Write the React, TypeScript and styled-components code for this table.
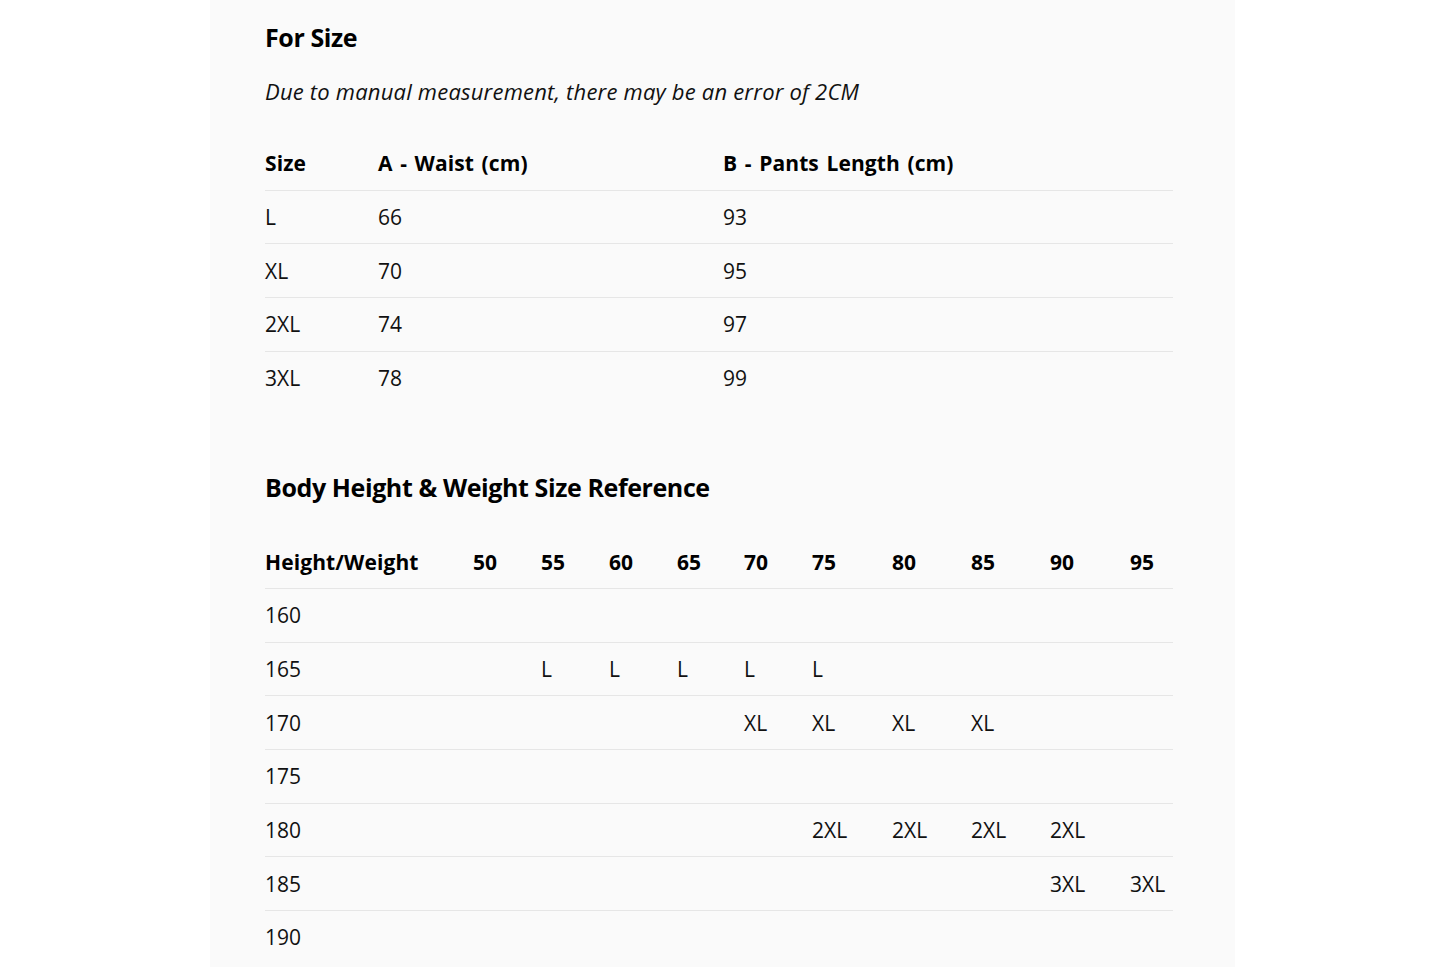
import React from "react";
import styled, { createGlobalStyle } from "styled-components";

const GlobalStyle = createGlobalStyle`
  html, body {
    margin: 0;
    padding: 0;
    background: #ffffff;
  }
  body {
    font-family: "Open Sans", "Noto Sans", Arial, sans-serif;
    color: #111;
  }
`;

const Page = styled.div`
  display: flex;
  justify-content: flex-start;
  min-height: 967px;
  padding-left: 210px;
`;

const Panel = styled.section`
  width: 1025px;
  min-height: 967px;
  box-sizing: border-box;
  background: #fafafa;
  padding: 19px 62px 0 55px;
`;

const Heading = styled.h2<{ $top: number }>`
  margin: ${(p) => p.$top}px 0 0;
  font-size: 25px;
  line-height: 36px;
  font-weight: 700;
  color: #000;
  letter-spacing: -0.4px;
`;

const Note = styled.p`
  margin: 21px 0 0;
  font-size: 22px;
  line-height: 30px;
  font-style: italic;
  color: #111;
  letter-spacing: 0.2px;
`;

const Table = styled.table<{ $top: number }>`
  width: 908px;
  margin-top: ${(p) => p.$top}px;
  border-collapse: collapse;
  table-layout: fixed;
`;

const Row = styled.tr`
  & + & {
    border-top: 1px solid #e6e6e6;
  }
`;

const HeadRow = styled.tr`
  border-bottom: 1px solid #e6e6e6;
`;

const Th = styled.th`
  height: 52.67px;
  padding: 0;
  text-align: left;
  vertical-align: middle;
  font-size: 21px;
  font-weight: 700;
  color: #000;
  letter-spacing: 0.1px;
  word-spacing: 2px;
  white-space: nowrap;
`;

const Td = styled.td`
  height: 52.67px;
  padding: 0;
  text-align: left;
  vertical-align: middle;
  font-size: 21px;
  font-weight: 400;
  color: #111;
  white-space: nowrap;
`;

const sizeRows = [
  ["L", "66", "93"],
  ["XL", "70", "95"],
  ["2XL", "74", "97"],
  ["3XL", "78", "99"],
];

const weights = ["50", "55", "60", "65", "70", "75", "80", "85", "90", "95"];
const weightCols = [208, 68, 68, 68, 67, 68, 80, 79, 79, 80];

const heightRows: [string, string[]][] = [
  ["160", []],
  ["165", ["", "L", "L", "L", "L", "L"]],
  ["170", ["", "", "", "", "XL", "XL", "XL", "XL"]],
  ["175", []],
  ["180", ["", "", "", "", "", "2XL", "2XL", "2XL", "2XL"]],
  ["185", ["", "", "", "", "", "", "", "", "3XL", "3XL"]],
  ["190", []],
];

export default function App() {
  return (
    <>
      <GlobalStyle />
      <Page>
        <Panel>
          <Heading $top={0}>For Size</Heading>
          <Note>Due to manual measurement, there may be an error of 2CM</Note>

          <Table $top={31}>
            <colgroup>
              <col style={{ width: 113 }} />
              <col style={{ width: 345 }} />
              <col />
            </colgroup>
            <thead>
              <HeadRow>
                <Th>Size</Th>
                <Th>A - Waist (cm)</Th>
                <Th>B - Pants Length (cm)</Th>
              </HeadRow>
            </thead>
            <tbody>
              {sizeRows.map((r) => (
                <Row key={r[0]}>
                  {r.map((c, i) => (
                    <Td key={i}>{c}</Td>
                  ))}
                </Row>
              ))}
            </tbody>
          </Table>

          <Heading $top={65}>Body Height &amp; Weight Size Reference</Heading>

          <Table $top={30}>
            <colgroup>
              {weightCols.map((w, i) => (
                <col key={i} style={{ width: w }} />
              ))}
              <col />
            </colgroup>
            <thead>
              <HeadRow>
                <Th>Height/Weight</Th>
                {weights.map((w) => (
                  <Th key={w}>{w}</Th>
                ))}
              </HeadRow>
            </thead>
            <tbody>
              {heightRows.map(([h, cells]) => (
                <Row key={h}>
                  <Td>{h}</Td>
                  {weights.map((w, i) => (
                    <Td key={w}>{cells[i] ?? ""}</Td>
                  ))}
                </Row>
              ))}
            </tbody>
          </Table>
        </Panel>
      </Page>
    </>
  );
}
